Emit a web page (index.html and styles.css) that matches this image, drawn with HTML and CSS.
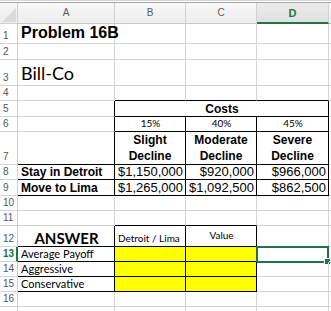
FILE: index.html
```html
<!DOCTYPE html>
<html>
<head>
<meta charset="utf-8">
<link rel="stylesheet" href="styles.css">
</head>
<body>
<div class="topbar"></div>
<div class="sheet">
  <!-- header -->
  <div class="c corner"><svg class="tri" width="18" height="21" viewBox="0 0 18 21"><polygon points="16,5 16,19 2,19" fill="#dadada"/></svg></div>
  <div class="c ch">A</div>
  <div class="c ch">B</div>
  <div class="c ch">C</div>
  <div class="c ch sel">D</div>
  <div class="c ch"></div>

  <!-- row 1 -->
  <div class="c rh">1</div>
  <div class="c title">Problem 16B</div>
  <div class="c"></div><div class="c"></div><div class="c"></div><div class="c"></div>

  <!-- row 2 -->
  <div class="c rh">2</div>
  <div class="c"></div><div class="c"></div><div class="c"></div><div class="c"></div><div class="c"></div>

  <!-- row 3 -->
  <div class="c rh">3</div>
  <div class="c company">Bill-Co</div>
  <div class="c"></div><div class="c"></div><div class="c"></div><div class="c"></div>

  <!-- row 4 -->
  <div class="c rh">4</div>
  <div class="c"></div><div class="c bb"></div><div class="c bb"></div><div class="c bb"></div><div class="c"></div>

  <!-- row 5 -->
  <div class="c rh">5</div>
  <div class="c br"></div>
  <div class="c span3 bb br bold center">Costs</div>
  <div class="c"></div>

  <!-- row 6 -->
  <div class="c rh">6</div>
  <div class="c br"></div>
  <div class="c bb br pct">15%</div>
  <div class="c bb br pct">40%</div>
  <div class="c bb br pct">45%</div>
  <div class="c"></div>

  <!-- row 7 -->
  <div class="c rh">7</div>
  <div class="c br bb"></div>
  <div class="c bb br bold wrap">Slight Decline</div>
  <div class="c bb br bold wrap">Moderate Decline</div>
  <div class="c bb br bold wrap">Severe Decline</div>
  <div class="c"></div>

  <!-- row 8 -->
  <div class="c rh">8</div>
  <div class="c bb br bold">Stay in Detroit</div>
  <div class="c bb br num">$1,150,000</div>
  <div class="c bb br num">$920,000</div>
  <div class="c bb br num">$966,000</div>
  <div class="c"></div>

  <!-- row 9 -->
  <div class="c rh">9</div>
  <div class="c bb br bold">Move to Lima</div>
  <div class="c bb br num">$1,265,000</div>
  <div class="c bb br num">$1,092,500</div>
  <div class="c bb br num">$862,500</div>
  <div class="c"></div>

  <!-- row 10 -->
  <div class="c rh">10</div>
  <div class="c"></div><div class="c"></div><div class="c"></div><div class="c"></div><div class="c"></div>

  <!-- row 11 -->
  <div class="c rh">11</div>
  <div class="c"></div><div class="c bb"></div><div class="c bb"></div><div class="c"></div><div class="c"></div>

  <!-- row 12 -->
  <div class="c rh">12</div>
  <div class="c br bb answer">ANSWER</div>
  <div class="c bb br small">Detroit / Lima</div>
  <div class="c bb br value">Value</div>
  <div class="c"></div>
  <div class="c"></div>

  <!-- row 13 -->
  <div class="c rh rsel">13</div>
  <div class="c bb br cal">Average Payoff</div>
  <div class="c bb br yellow"></div>
  <div class="c bb br yellow"></div>
  <div class="c active"><div class="selbox"></div><div class="handle"></div></div>
  <div class="c"></div>

  <!-- row 14 -->
  <div class="c rh">14</div>
  <div class="c bb br cal">Aggressive</div>
  <div class="c bb br yellow"></div>
  <div class="c bb br yellow"></div>
  <div class="c"></div>
  <div class="c"></div>

  <!-- row 15 -->
  <div class="c rh">15</div>
  <div class="c bb br cal">Conservative</div>
  <div class="c bb br yellow"></div>
  <div class="c bb br yellow"></div>
  <div class="c"></div>
  <div class="c"></div>

  <!-- row 16 -->
  <div class="c rh">16</div>
  <div class="c"></div><div class="c"></div><div class="c"></div><div class="c"></div><div class="c"></div>

  <!-- row 17 -->
  <div class="c rh"></div>
  <div class="c"></div><div class="c"></div><div class="c"></div><div class="c"></div><div class="c"></div>
</div>
</body>
</html>
```

FILE: styles.css
```css
html, body {
  margin: 0;
  padding: 0;
  background: #ffffff;
  overflow: hidden;
}

body {
  font-family: "Liberation Sans", Arial, sans-serif;
  color: #000;
}

.topbar {
  height: 3px;
  box-sizing: border-box;
  border-top: 1px solid #d8d8d8;
  border-bottom: 1px solid #a8a8a8;
  background: #fff;
}

.sheet {
  display: grid;
  width: 100%;
  grid-template-columns: 18px 97px 71px 71px 72px 1fr;
  grid-template-rows: 21px 20px 16px 26px 15px 16px 15px 33px 15px 16px 15px 15px 21px 15px 15px 15px 15px 16px;
}

.c {
  box-sizing: border-box;
  border-right: 1px solid #d4d4d4;
  border-bottom: 1px solid #d4d4d4;
  display: flex;
  align-items: flex-end;
  padding: 0 2px 0 3px;
  white-space: nowrap;
  min-width: 0;
  overflow: visible;
  font-size: 12px;
  line-height: 14px;
  position: relative;
}

.corner {
  background: linear-gradient(#f7f7f7, #ececec);
  border-color: #cfcfcf;
  padding: 0;
}

.tri {
  position: absolute;
  left: 0;
  top: 0;
}

.ch {
  background: linear-gradient(#f8f8f8, #ededed);
  border-right-color: #d2d2d2;
  border-bottom-color: #c8c8c8;
  justify-content: center;
  align-items: center;
  color: #5a5a5a;
  font-size: 10px;
  padding: 0;
}

.ch.sel {
  background: linear-gradient(#ececec, #e0e0e0);
  border-bottom: 2px solid #217346;
  color: #217346;
  font-weight: bold;
  font-size: 11px;
}

.rh {
  font-size: 10px;
  line-height: 12px;
  color: #555;
  padding: 0 0 1px 3px;
  border-right-color: #d0d0d0;
}

.rh.rsel {
  color: #217346;
  font-weight: bold;
  border-right: 2px solid #217346;
}

.bb { border-bottom-color: #000; }
.br { border-right-color: #000; }

.span3 { grid-column: span 3; }

.bold { font-weight: bold; }

.center { justify-content: center; }

.title {
  font-weight: bold;
  font-size: 16px;
  line-height: 18px;
  padding-bottom: 1px;
}

.company {
  font-family: Lato, "Liberation Sans", sans-serif;
  font-size: 18px;
  line-height: 20px;
  padding-bottom: 2px;
}

.pct {
  font-family: Lato, "Liberation Sans", sans-serif;
  font-size: 10px;
  justify-content: center;
  padding-bottom: 1px;
}

.wrap {
  white-space: normal;
  text-align: center;
  justify-content: center;
  line-height: 16px;
  padding: 0 2px;
}

.num {
  justify-content: flex-end;
  font-size: 13px;
  padding-right: 2px;
}

.answer {
  font-family: Lato, "Liberation Sans", sans-serif;
  font-weight: bold;
  font-size: 15px;
  justify-content: center;
  padding-bottom: 1px;
}

.small {
  font-family: Lato, "Liberation Sans", sans-serif;
  font-size: 10px;
  padding-bottom: 1px;
}

.value {
  font-family: Lato, "Liberation Sans", sans-serif;
  font-size: 10px;
  justify-content: center;
  align-items: flex-start;
  padding-top: 2px;
}

.cal {
  font-family: Lato, "Liberation Sans", sans-serif;
  font-size: 11px;
}

.yellow { background: #ffff00; }

.selbox {
  position: absolute;
  left: -1px;
  top: -1px;
  width: 73px;
  height: 17px;
  box-sizing: border-box;
  border: 2px solid #217346;
}

.handle {
  position: absolute;
  right: -2px;
  bottom: -3px;
  width: 5px;
  height: 5px;
  background: #217346;
  outline: 1px solid #fff;
}
```
